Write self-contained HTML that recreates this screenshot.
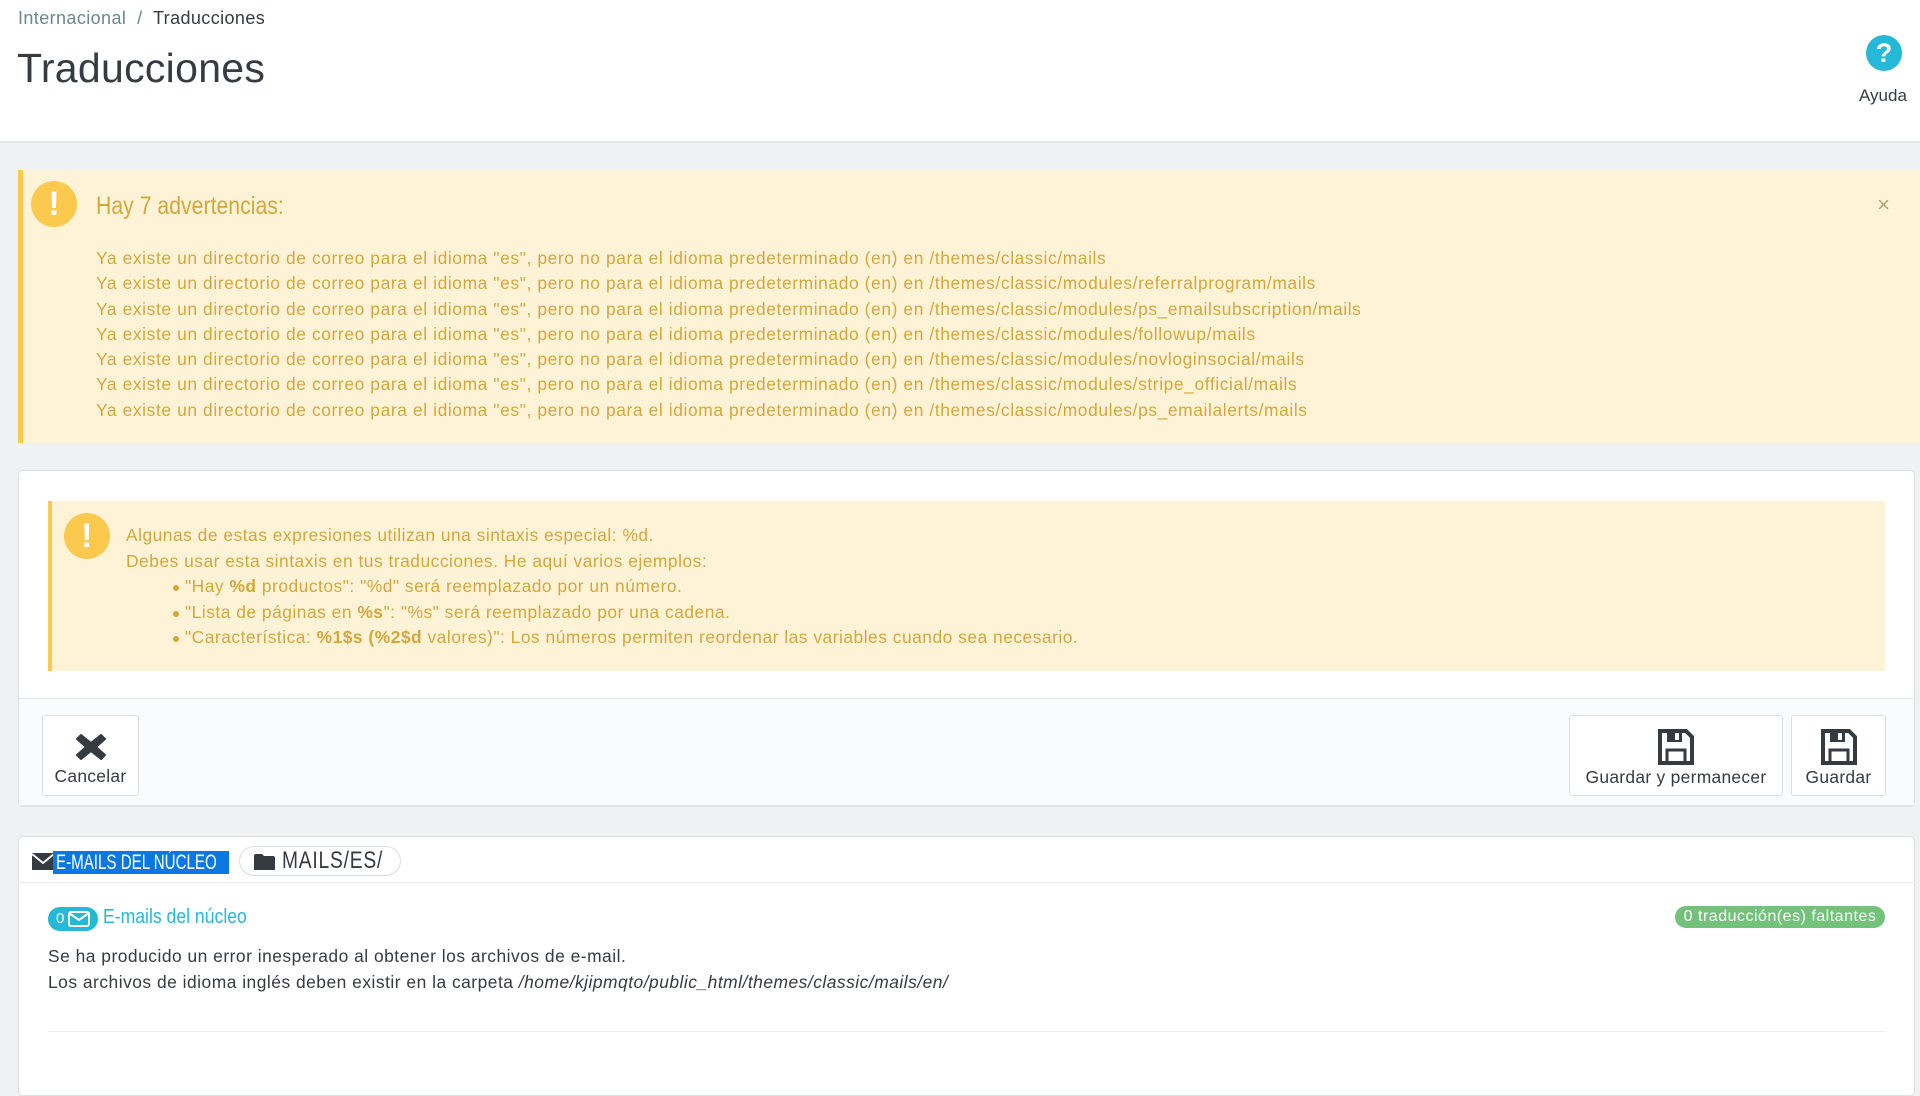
<!DOCTYPE html>
<html><head><meta charset="utf-8"><style>
*{box-sizing:border-box;margin:0;padding:0}
body{width:1920px;height:1073px;overflow:hidden;background:#eff1f2;font-family:"Liberation Sans",sans-serif;color:#363a41;position:relative}
.hdr{position:absolute;left:0;top:0;width:1920px;height:143px;background:#fff;border-bottom:2px solid #e4e6e8}
.bc{position:absolute;left:18px;top:8px;font-size:18px;color:#6c868e;letter-spacing:.4px}
.bc b{font-weight:normal;color:#363a41}
h1{position:absolute;left:17px;top:45px;font-size:41px;font-weight:normal;color:#363a41;letter-spacing:.3px}
.help{position:absolute;left:1866px;top:35px;width:36px;height:36px;border-radius:50%;background:#25b9d7;color:#fff;font-weight:bold;font-size:27px;text-align:center;line-height:36px}
.helpt{position:absolute;left:1859px;top:86px;font-size:17px}
.warn{position:absolute;left:18px;top:170px;width:1902px;height:273px;background:#fff3d7;border-left:5px solid #fcc94f;color:#d5a73a}
.ic{position:absolute;width:46px;height:46px;border-radius:50%;background:#fcc94f;color:#fff;font-weight:bold;font-size:34px;text-align:center;line-height:46px}
.warn h2{position:absolute;left:73px;top:22px;font-weight:normal;font-size:25px;transform:scaleX(.85);transform-origin:left}
.lines{position:absolute;left:73px;top:76px;font-size:17.4px;line-height:25.3px;letter-spacing:.6px}
.x{position:absolute;right:30px;top:22px;font-size:22px;color:#b9a36f}
.panel{position:absolute;left:18px;top:470px;width:1897px;height:335px;background:#fff;border:1px solid #dbe1e3;border-radius:5px;box-shadow:0 2px 0 rgba(0,0,0,.06)}
.in{position:absolute;left:29px;top:30px;width:1837px;height:170px;background:#fff3d7;border-left:4px solid #fcc94f;color:#d5a73a;font-size:17.4px;line-height:25.6px;letter-spacing:.5px}
.in .t{position:absolute;left:74px;top:22px}
.in ul{list-style:none}
.in li{padding-left:59px;position:relative}
.in li:before{content:"";position:absolute;left:47px;top:11px;width:6px;height:6px;border-radius:50%;background:#d5a73a}
.foot{position:absolute;left:0;top:227px;width:100%;height:107px;background:#fafbfc;border-top:1px solid #e6e9eb}
.btn{position:absolute;top:16px;height:81px;background:#fff;border:1px solid #dbe1e3;border-radius:3px;font-size:17.4px;text-align:center;color:#363a41;letter-spacing:.3px}
.btn svg{display:block;margin:13px auto 2px}
.p2{position:absolute;left:18px;top:836px;width:1897px;height:260px;background:#fff;border:1px solid #dbe1e3;border-radius:5px}
.tab1{position:absolute;left:53px;top:851px;height:23px;width:176px;color:#fff;background:#0a78e0;overflow:hidden}
.tab1 span{position:absolute;left:3px;top:0;font-size:21px;line-height:23px;white-space:nowrap;transform:scaleX(.72);transform-origin:left}
.tab2{position:absolute;left:239px;top:846px;height:30px;width:162px;border:1px solid #d8dde0;border-radius:15px;color:#363a41}
.tab2 span{position:absolute;left:42px;top:0;font-size:24px;line-height:28px;white-space:nowrap;transform:scaleX(.8);transform-origin:left;letter-spacing:1px}
.l1{position:absolute;left:18px;top:882px;width:1897px;height:1px;background:#e9ecee}
.cnt{position:absolute;left:48px;top:907px;width:50px;height:24px;border-radius:12px;background:#25b9d7;color:#fff;font-size:15px;line-height:24px;padding-left:8px}
.emt{position:absolute;left:103px;top:906px;font-size:20px;color:#25b9d7;transform:scaleX(.88);transform-origin:left}
.txt{position:absolute;left:48px;top:944px;font-size:17.4px;line-height:25.6px;color:#363a41;letter-spacing:.5px}
.grn{position:absolute;left:1675px;top:906px;width:210px;height:22px;border-radius:11px;background:#72c279;color:#fff;font-size:16px;line-height:22px;text-align:center;letter-spacing:.5px}
.l2{position:absolute;left:48px;top:1031px;width:1837px;height:1px;background:#e9ecee}
</style></head><body>
<div class="hdr">
<div class="bc">Internacional &nbsp;/&nbsp; <b>Traducciones</b></div>
<h1>Traducciones</h1>
<div class="help">?</div><div class="helpt">Ayuda</div>
</div>
<div class="warn">
<div class="ic" style="left:8px;top:11px">!</div>
<h2>Hay 7 advertencias:</h2>
<div class="x">×</div>
<div class="lines">
Ya existe un directorio de correo para el idioma "es", pero no para el idioma predeterminado (en) en /themes/classic/mails<br>
Ya existe un directorio de correo para el idioma "es", pero no para el idioma predeterminado (en) en /themes/classic/modules/referralprogram/mails<br>
Ya existe un directorio de correo para el idioma "es", pero no para el idioma predeterminado (en) en /themes/classic/modules/ps_emailsubscription/mails<br>
Ya existe un directorio de correo para el idioma "es", pero no para el idioma predeterminado (en) en /themes/classic/modules/followup/mails<br>
Ya existe un directorio de correo para el idioma "es", pero no para el idioma predeterminado (en) en /themes/classic/modules/novloginsocial/mails<br>
Ya existe un directorio de correo para el idioma "es", pero no para el idioma predeterminado (en) en /themes/classic/modules/stripe_official/mails<br>
Ya existe un directorio de correo para el idioma "es", pero no para el idioma predeterminado (en) en /themes/classic/modules/ps_emailalerts/mails
</div>
</div>
<div class="panel">
<div class="in">
<div class="ic" style="left:12px;top:12px">!</div>
<div class="t">Algunas de estas expresiones utilizan una sintaxis especial: %d.<br>Debes usar esta sintaxis en tus traducciones. He aquí varios ejemplos:
<ul>
<li>"Hay <b>%d</b> productos": "%d" será reemplazado por un número.</li>
<li>"Lista de páginas en <b>%s</b>": "%s" será reemplazado por una cadena.</li>
<li>"Característica: <b>%1$s (%2$d</b> valores)": Los números permiten reordenar las variables cuando sea necesario.</li>
</ul></div>
</div>
<div class="foot">
<div class="btn" style="left:23px;width:97px"><svg width="32" height="30" viewBox="0 0 32 30" style="margin:16px auto 4px"><path d="M6 3 L16 11 L26 3 L30 7 L21 15 L30 23 L26 27 L16 19 L6 27 L2 23 L11 15 L2 7Z" fill="#363a41" stroke="#363a41" stroke-width="2" stroke-linejoin="round"/></svg>Cancelar</div>
<div class="btn" style="left:1550px;width:214px"><svg width="36" height="36" viewBox="0 0 36 36"><path d="M2 2H28L34 8V34H2Z" fill="none" stroke="#363a41" stroke-width="4"/><rect x="9" y="2" width="15" height="11" fill="#363a41"/><rect x="17" y="4" width="4" height="7" fill="#fff"/><rect x="9" y="21" width="18" height="13" fill="none" stroke="#363a41" stroke-width="3"/></svg>Guardar y permanecer</div>
<div class="btn" style="left:1772px;width:95px"><svg width="36" height="36" viewBox="0 0 36 36"><path d="M2 2H28L34 8V34H2Z" fill="none" stroke="#363a41" stroke-width="4"/><rect x="9" y="2" width="15" height="11" fill="#363a41"/><rect x="17" y="4" width="4" height="7" fill="#fff"/><rect x="9" y="21" width="18" height="13" fill="none" stroke="#363a41" stroke-width="3"/></svg>Guardar</div>
</div>
</div>
<div class="p2"></div>
<svg style="position:absolute;left:32px;top:853px" width="22" height="17" viewBox="0 0 22 17"><rect x="0" y="0" width="22" height="17" fill="#363a41"/><path d="M0 1 L11 10 L22 1" fill="none" stroke="#fff" stroke-width="2"/></svg>
<div class="tab1"><span>E-MAILS DEL NÚCLEO</span></div>
<div class="tab2"><svg style="position:absolute;left:14px;top:7px" width="21" height="16" viewBox="0 0 21 16"><path d="M0 2Q0 0 2 0H8L10 2H19Q21 2 21 4V16H0Z" fill="#363a41"/></svg><span>MAILS/ES/</span></div>
<div class="l1"></div>
<div class="cnt">0<svg style="position:absolute;left:20px;top:4px" width="22" height="16" viewBox="0 0 22 16"><rect x="1" y="1" width="20" height="14" rx="2" fill="none" stroke="#fff" stroke-width="2"/><path d="M1 2L11 9L21 2" fill="none" stroke="#fff" stroke-width="2"/></svg></div>
<div class="emt">E-mails del núcleo</div>
<div class="grn">0 traducción(es) faltantes</div>
<div class="txt">Se ha producido un error inesperado al obtener los archivos de e-mail.<br>Los archivos de idioma inglés deben existir en la carpeta <i>/home/kjipmqto/public_html/themes/classic/mails/en/</i></div>
<div class="l2"></div>
</body></html>
